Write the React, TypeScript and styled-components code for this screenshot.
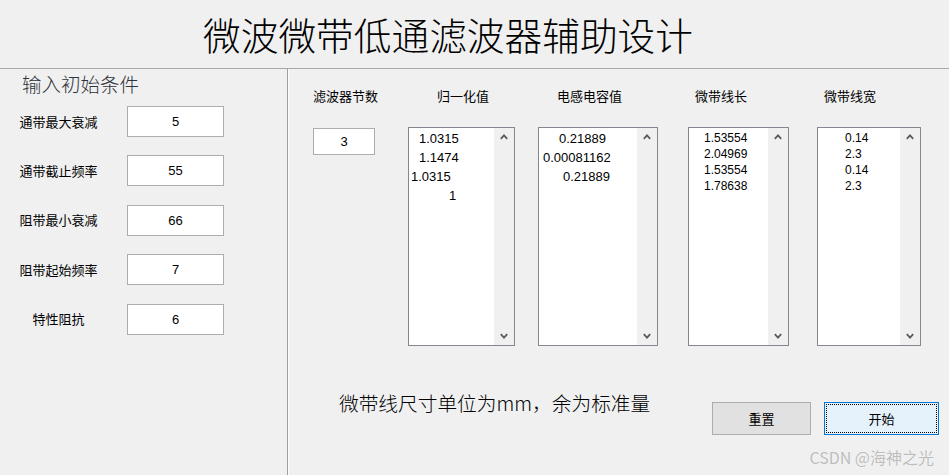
import React from "react";
import styled, { createGlobalStyle } from "styled-components";

const CJK = `"Noto Sans CJK SC", "Noto Sans", sans-serif`;
const LATIN = `"Liberation Sans", Arial, "Noto Sans CJK SC", sans-serif`;

const Global = createGlobalStyle`
  html, body {
    margin: 0;
    padding: 0;
    background: #f0f0f0;
    overflow: hidden;
  }
  * { box-sizing: border-box; }
`;

const Window = styled.div`
  position: relative;
  width: 949px;
  height: 475px;
  display: flex;
  flex-direction: column;
  background: #f0f0f0;
  font-family: ${CJK};
  color: #000;
`;

const TitleBar = styled.header`
  height: 69px;
  flex: none;
  display: flex;
  align-items: center;
  padding-left: 203px;
  border-bottom: 1px solid #a8a8a8;
`;

const Title = styled.h1`
  margin: 0;
  font-weight: 300;
  font-size: 37.7px;
  line-height: 1;
  letter-spacing: 0;
  white-space: nowrap;
`;

const Body = styled.div`
  flex: 1;
  display: flex;
  min-height: 0;
`;

/* ---------- left: input conditions ---------- */

const InputPanel = styled.section`
  width: 288px;
  flex: none;
  border-right: 1px solid #a0a0a0;
  padding-top: 3px;
`;

const Legend = styled.div`
  padding-left: 22px;
  font-size: 19.5px;
  font-weight: 300;
  line-height: 23px;
  color: #2e343c;
  white-space: nowrap;
`;

const FieldList = styled.div`
  margin-top: 11px;
  display: flex;
  flex-direction: column;
  gap: 18.4px;
`;

const FieldRow = styled.div`
  display: grid;
  grid-template-columns: 117px 97px;
  column-gap: 10px;
  align-items: center;
`;

const FieldLabel = styled.span`
  text-align: center;
  font-size: 13px;
  line-height: 16px;
  white-space: nowrap;
`;

const ValueBox = styled.div<{ $w: number; $h: number }>`
  width: ${(p) => p.$w}px;
  height: ${(p) => p.$h}px;
  background: #fff;
  border: 1px solid #adadad;
  display: flex;
  align-items: center;
  justify-content: center;
  font-family: ${LATIN};
  font-size: 13px;
`;

/* ---------- right: results ---------- */

const ResultPanel = styled.section`
  flex: 1;
  border-left: 1px solid #fcfcfc;
  display: flex;
  flex-direction: column;
  padding-top: 19px;
`;

const ResultGrid = styled.div`
  display: grid;
  grid-template-columns: 95px 130px 150px 129px 104px;
  grid-template-rows: auto auto;
  row-gap: 24px;
  padding-left: 24px;
`;

const ColumnHead = styled.div<{ $offset: number }>`
  padding-left: ${(p) => p.$offset}px;
  font-size: 13px;
  line-height: 15px;
  white-space: nowrap;
`;

const OrderCell = styled.div`
  padding-top: 1px;
`;

const ListBox = styled.div<{ $w: number }>`
  width: ${(p) => p.$w}px;
  height: 219px;
  border: 1px solid #828790;
  display: flex;
  background: #fff;
`;

const ListItems = styled.div<{ $size: number; $lh: number; $top: number }>`
  flex: 1;
  padding-top: ${(p) => p.$top}px;
  font-family: ${LATIN};
  font-size: ${(p) => p.$size}px;
  line-height: ${(p) => p.$lh}px;
  white-space: pre;
`;

const ListItem = styled.div<{ $indent: number }>`
  padding-left: ${(p) => p.$indent}px;
`;

const ScrollTrack = styled.div`
  width: 20px;
  flex: none;
  background: #f0f0f0;
  display: flex;
  flex-direction: column;
  justify-content: space-between;
`;

const ScrollArrow = styled.div`
  height: 18px;
  display: flex;
  align-items: center;
  justify-content: center;
`;

const Footer = styled.div`
  margin-top: 45px;
  display: flex;
  align-items: flex-start;
  padding-left: 50px;
  padding-right: 10px;
`;

const Note = styled.div`
  font-size: 19.7px;
  font-weight: 300;
  line-height: 24px;
  white-space: nowrap;
`;

const Actions = styled.div`
  margin-left: auto;
  margin-top: 11px;
  display: flex;
  gap: 13px;
`;

const Button = styled.button<{ $w: number; $primary?: boolean }>`
  position: relative;
  width: ${(p) => p.$w}px;
  height: 33px;
  margin: 0;
  padding: 0;
  font-family: ${CJK};
  font-size: 13px;
  color: #000;
  background: ${(p) => (p.$primary ? "#e5f1fb" : "#e1e1e1")};
  border: 1px solid ${(p) => (p.$primary ? "#0078d7" : "#adadad")};
  outline: ${(p) => (p.$primary ? "1px dotted #000" : "none")};
  outline-offset: -3px;
  cursor: default;
`;

const Watermark = styled.div`
  position: absolute;
  right: 15px;
  bottom: 7px;
  font-family: ${CJK};
  font-size: 16px;
  line-height: 21px;
  color: #bdbdbd;
  text-shadow: 0 0 1px rgba(255, 255, 255, 0.8);
  white-space: nowrap;
`;

function Chevron({ dir }: { dir: "up" | "down" }) {
  const pts = dir === "up" ? "0.8,4.8 4,1.4 7.2,4.8" : "0.8,1.2 4,4.6 7.2,1.2";
  return (
    <svg width="8" height="6" viewBox="0 0 8 6">
      <polyline points={pts} fill="none" stroke="#5a5a5a" strokeWidth="1.8" />
    </svg>
  );
}

type Line = [string, number];

interface ListSpec {
  head: string;
  headOffset: number;
  width: number;
  size: number;
  lh: number;
  top: number;
  lines: Line[];
}

const conditions: [string, string][] = [
  ["通带最大衰减", "5"],
  ["通带截止频率", "55"],
  ["阻带最小衰减", "66"],
  ["阻带起始频率", "7"],
  ["特性阻抗", "6"],
];

const lists: ListSpec[] = [
  {
    head: "归一化值",
    headOffset: 29,
    width: 107,
    size: 13,
    lh: 19,
    top: 1,
    lines: [
      ["1.0315", 10],
      ["1.1474", 10],
      ["1.0315", 2],
      ["1", 40],
    ],
  },
  {
    head: "电感电容值",
    headOffset: 19,
    width: 120,
    size: 13,
    lh: 19,
    top: 1,
    lines: [
      ["0.21889", 20],
      ["0.00081162", 4],
      ["0.21889", 24],
    ],
  },
  {
    head: "微带线长",
    headOffset: 7,
    width: 101,
    size: 12,
    lh: 16,
    top: 2,
    lines: [
      ["1.53554", 15],
      ["2.04969", 15],
      ["1.53554", 15],
      ["1.78638", 15],
    ],
  },
  {
    head: "微带线宽",
    headOffset: 7,
    width: 104,
    size: 12,
    lh: 16,
    top: 2,
    lines: [
      ["0.14", 27],
      ["2.3", 27],
      ["0.14", 27],
      ["2.3", 27],
    ],
  },
];

export default function App() {
  return (
    <>
      <Global />
      <Window>
        <TitleBar>
          <Title>微波微带低通滤波器辅助设计</Title>
        </TitleBar>
        <Body>
          <InputPanel>
            <Legend>输入初始条件</Legend>
            <FieldList>
              {conditions.map(([label, value]) => (
                <FieldRow key={label}>
                  <FieldLabel>{label}</FieldLabel>
                  <ValueBox $w={97} $h={31}>
                    {value}
                  </ValueBox>
                </FieldRow>
              ))}
            </FieldList>
          </InputPanel>
          <ResultPanel>
            <ResultGrid>
              <ColumnHead $offset={0}>滤波器节数</ColumnHead>
              {lists.map((l) => (
                <ColumnHead key={l.head} $offset={l.headOffset}>
                  {l.head}
                </ColumnHead>
              ))}
              <OrderCell>
                <ValueBox $w={62} $h={27}>
                  3
                </ValueBox>
              </OrderCell>
              {lists.map((l) => (
                <ListBox key={l.head} $w={l.width}>
                  <ListItems $size={l.size} $lh={l.lh} $top={l.top}>
                    {l.lines.map(([text, indent], i) => (
                      <ListItem key={i} $indent={indent}>
                        {text}
                      </ListItem>
                    ))}
                  </ListItems>
                  <ScrollTrack>
                    <ScrollArrow>
                      <Chevron dir="up" />
                    </ScrollArrow>
                    <ScrollArrow>
                      <Chevron dir="down" />
                    </ScrollArrow>
                  </ScrollTrack>
                </ListBox>
              ))}
            </ResultGrid>
            <Footer>
              <Note>微带线尺寸单位为mm，余为标准量</Note>
              <Actions>
                <Button $w={99}>重置</Button>
                <Button $w={115} $primary>
                  开始
                </Button>
              </Actions>
            </Footer>
          </ResultPanel>
        </Body>
        <Watermark>CSDN @海神之光</Watermark>
      </Window>
    </>
  );
}
